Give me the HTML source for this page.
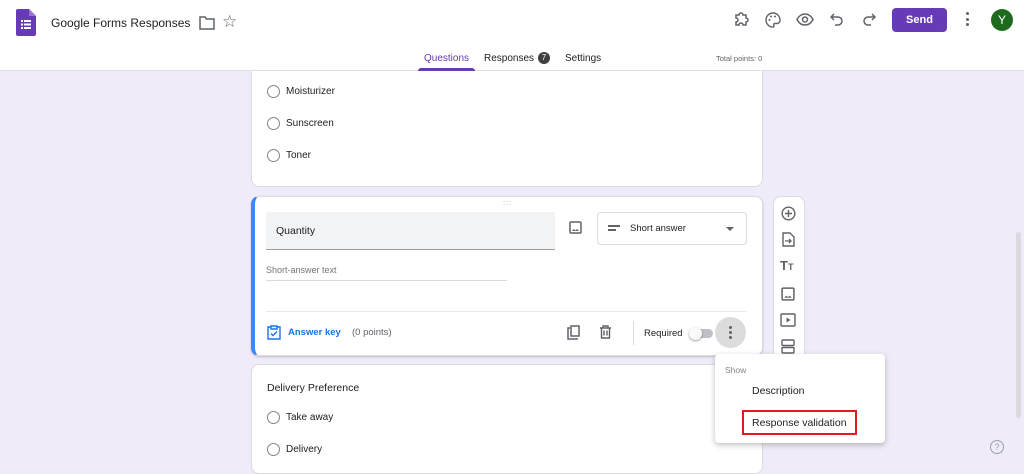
<!DOCTYPE html><html><head><style>
*{margin:0;padding:0;box-sizing:border-box}
body{width:1024px;height:463px;overflow:hidden;background:#f0ebf8;font-family:"Liberation Sans",sans-serif;position:relative;color:#202124}
.abs{position:absolute}
.hdr{left:0;top:0;width:1024px;height:71px;background:#fff;border-bottom:1px solid #e0e0e0}
.card{background:#fff;border-radius:8px;border:1px solid #dadce0}
.radio{width:13px;height:13px;border:1.3px solid #80868b;border-radius:50%}
.t13{font-size:10px}
svg{position:absolute}
</style></head><body>
<div class="abs hdr"></div>
<svg style="left:16px;top:9px" width="20" height="27" viewBox="0 0 20 27"><path d="M2 0h11l7 7v18a2 2 0 0 1-2 2H2a2 2 0 0 1-2-2V2a2 2 0 0 1 2-2z" fill="#673ab7"/><path d="M13 0v7h7z" fill="#9575cd"/><g fill="#fff"><rect x="5" y="11" width="2" height="2"/><rect x="8" y="11" width="7" height="2"/><rect x="5" y="14.5" width="2" height="2"/><rect x="8" y="14.5" width="7" height="2"/><rect x="5" y="18" width="2" height="2"/><rect x="8" y="18" width="7" height="2"/></g></svg>
<div class="abs" style="left:51px;top:16px;font-size:12px;color:#202124">Google Forms Responses</div>
<svg style="left:199px;top:16px" width="16" height="14" viewBox="0 0 16 14"><path d="M1 1h5l1.5 2H15v10H1z" fill="none" stroke="#5f6368" stroke-width="1.5"/></svg>
<div class="abs" style="left:222px;top:12px;font-size:17px;color:#5f6368">☆</div>
<svg style="left:733px;top:12px" width="16" height="16" viewBox="0 0 16 16"><path d="M3 3h3a2 2 0 0 1 4 0h3v3a2 2 0 0 1 0 4v3h-3a2 2 0 0 0-4 0H3v-3a2 2 0 0 0 0-4z" fill="none" stroke="#5f6368" stroke-width="1.5"/></svg>
<svg style="left:765px;top:12px" width="16" height="16" viewBox="0 0 16 16"><path d="M8 1a7 7 0 0 0 0 14c1 0 1.3-1 .8-1.8-.5-.8 0-1.7 1-1.7H12a3 3 0 0 0 3-3C15 4 12 1 8 1z" fill="none" stroke="#5f6368" stroke-width="1.4"/><circle cx="4.5" cy="8" r="1" fill="#5f6368"/><circle cx="6" cy="4.5" r="1" fill="#5f6368"/><circle cx="10" cy="4.5" r="1" fill="#5f6368"/></svg>
<svg style="left:796px;top:13px" width="18" height="13" viewBox="0 0 18 13"><path d="M1 6.5C3 2.5 6 1 9 1s6 1.5 8 5.5C15 10.5 12 12 9 12S3 10.5 1 6.5z" fill="none" stroke="#5f6368" stroke-width="1.5"/><circle cx="9" cy="6.5" r="2.5" fill="none" stroke="#5f6368" stroke-width="1.5"/></svg>
<svg style="left:830px;top:13px" width="14" height="14" viewBox="0 0 14 14"><path d="M4 1L1 4l3 3M1 4h7a4 4 0 0 1 0 8H5" fill="none" stroke="#5f6368" stroke-width="1.5"/></svg>
<svg style="left:862px;top:13px" width="14" height="14" viewBox="0 0 14 14"><path d="M10 1l3 3-3 3M13 4H6a4 4 0 0 0 0 8h3" fill="none" stroke="#5f6368" stroke-width="1.5"/></svg>
<div class="abs" style="left:892px;top:8px;width:55px;height:24px;background:#673ab7;border-radius:4px;color:#fff;font-size:11px;font-weight:bold;text-align:center;line-height:24px">Send</div>
<div class="abs" style="left:966px;top:12px;width:4px;font-size:0"><div style="width:3px;height:3px;background:#5f6368;border-radius:50%;margin-bottom:2.5px"></div><div style="width:3px;height:3px;background:#5f6368;border-radius:50%;margin-bottom:2.5px"></div><div style="width:3px;height:3px;background:#5f6368;border-radius:50%"></div></div>
<div class="abs" style="left:991px;top:9px;width:22px;height:22px;border-radius:50%;background:#1e6b1e;color:#fff;font-size:12px;text-align:center;line-height:22px">Y</div>
<div class="abs" style="left:424px;top:53px;font-size:10px;color:#673ab7">Questions</div>
<div class="abs" style="left:418px;top:68px;width:57px;height:3px;background:#673ab7;border-radius:3px 3px 0 0"></div>
<div class="abs" style="left:484px;top:53px;font-size:10px;color:#202124">Responses</div>
<div class="abs" style="left:538px;top:52px;width:12px;height:12px;border-radius:50%;background:#3c4043;color:#fff;font-size:8px;text-align:center;line-height:12px">7</div>
<div class="abs" style="left:565px;top:53px;font-size:10px;color:#202124">Settings</div>
<div class="abs" style="left:716px;top:54px;font-size:7.5px;color:#5f6368">Total points: 0</div>

<div class="abs card" style="left:251px;top:71px;width:512px;height:116px;border-top:none;border-radius:0 0 8px 8px"></div>
<div class="abs radio" style="left:267px;top:85px"></div><div class="abs t13" style="left:286px;top:86px">Moisturizer</div>
<div class="abs radio" style="left:267px;top:117px"></div><div class="abs t13" style="left:286px;top:118px">Sunscreen</div>
<div class="abs radio" style="left:267px;top:149px"></div><div class="abs t13" style="left:286px;top:150px">Toner</div>

<div class="abs card" style="left:251px;top:196px;width:512px;height:160px;border-left:4px solid #4285f4;box-shadow:0 1px 2px rgba(0,0,0,.2)"></div>
<div class="abs" style="left:503px;top:200px;font-size:7px;color:#9aa0a6;letter-spacing:1px">:::</div>
<div class="abs" style="left:266px;top:212px;width:289px;height:38px;background:#f1f3f4;border-bottom:1px solid #9e9e9e"></div>
<div class="abs" style="left:276px;top:225px;font-size:10.5px">Quantity</div>
<svg style="left:569px;top:221px" width="13" height="13" viewBox="0 0 13 13"><rect x="1" y="1" width="11" height="11" rx="1" fill="none" stroke="#5f6368" stroke-width="1.5"/><path d="M3 10l2-2 1.5 1.5L8 8l2 2z" fill="#5f6368"/></svg>
<div class="abs" style="left:597px;top:212px;width:150px;height:33px;border:1px solid #dadce0;border-radius:4px"></div>
<div class="abs" style="left:608px;top:225px;width:12px;height:1.5px;background:#5f6368"></div><div class="abs" style="left:608px;top:229px;width:8px;height:1.5px;background:#5f6368"></div>
<div class="abs" style="left:630px;top:223px;font-size:9.5px">Short answer</div>
<div class="abs" style="left:726px;top:227px;width:0;height:0;border-left:4px solid transparent;border-right:4px solid transparent;border-top:4px solid #5f6368"></div>
<div class="abs" style="left:266px;top:265px;font-size:9px;color:#70757a">Short-answer text</div>
<div class="abs" style="left:266px;top:280px;width:241px;height:1px;background:#dadce0"></div>
<div class="abs" style="left:266px;top:311px;width:481px;height:1px;background:#e8eaed"></div>
<svg style="left:267px;top:325px" width="14" height="15" viewBox="0 0 14 15"><path d="M4 2H1v12h12V2h-3M4 1h6v3H4z" fill="none" stroke="#1a73e8" stroke-width="1.4"/><path d="M4 8.5l2 2 4-4" fill="none" stroke="#1a73e8" stroke-width="1.4"/></svg>
<div class="abs" style="left:288px;top:327px;font-size:9.5px;color:#1a73e8;font-weight:bold">Answer key</div>
<div class="abs" style="left:352px;top:327px;font-size:9.5px;color:#5f6368">(0 points)</div>
<svg style="left:567px;top:325px" width="14" height="15" viewBox="0 0 14 15"><path d="M3 3H1v11h9v-1" fill="none" stroke="#5f6368" stroke-width="1.5"/><rect x="4" y="1" width="8" height="10" fill="none" stroke="#5f6368" stroke-width="1.5"/></svg>
<svg style="left:599px;top:325px" width="13" height="14" viewBox="0 0 13 14"><path d="M1 3h11M4 3V1h5v2M2.5 3v10h8V3M5 5.5v5M8 5.5v5" fill="none" stroke="#5f6368" stroke-width="1.4"/></svg>
<div class="abs" style="left:633px;top:321px;width:1px;height:24px;background:#dadce0"></div>
<div class="abs" style="left:644px;top:328px;font-size:9.5px">Required</div>
<div class="abs" style="left:691px;top:329px;width:22px;height:9px;border-radius:5px;background:#bdc1c6"></div>
<div class="abs" style="left:689px;top:327px;width:13px;height:13px;border-radius:50%;background:#fafafa;box-shadow:0 1px 2px rgba(0,0,0,.4)"></div>
<div class="abs" style="left:715px;top:317px;width:31px;height:31px;border-radius:50%;background:#dcdcdc"></div>
<div class="abs" style="left:729px;top:326px;font-size:0"><div style="width:3px;height:3px;background:#5f6368;border-radius:50%;margin-bottom:2px"></div><div style="width:3px;height:3px;background:#5f6368;border-radius:50%;margin-bottom:2px"></div><div style="width:3px;height:3px;background:#5f6368;border-radius:50%"></div></div>

<div class="abs card" style="left:773px;top:196px;width:32px;height:170px"></div>
<svg style="left:781px;top:206px" width="15" height="15" viewBox="0 0 15 15"><circle cx="7.5" cy="7.5" r="6.3" fill="none" stroke="#5f6368" stroke-width="1.4"/><path d="M7.5 4v7M4 7.5h7" stroke="#5f6368" stroke-width="1.4"/></svg>
<svg style="left:782px;top:232px" width="13" height="15" viewBox="0 0 13 15"><path d="M1 1h7l4 4v9H1z" fill="none" stroke="#5f6368" stroke-width="1.4"/><path d="M3 9h6M7 7l2 2-2 2" fill="none" stroke="#5f6368" stroke-width="1.3"/></svg>
<div class="abs" style="left:780px;top:258px;font-size:13px;font-weight:bold;color:#5f6368">T<span style="font-size:9px">T</span></div>
<svg style="left:781px;top:287px" width="14" height="14" viewBox="0 0 13 13"><rect x="1" y="1" width="11" height="11" rx="1" fill="none" stroke="#5f6368" stroke-width="1.4"/><path d="M3 10l2-2 1.5 1.5L8 8l2 2z" fill="#5f6368"/></svg>
<svg style="left:780px;top:313px" width="16" height="14" viewBox="0 0 16 14"><rect x="1" y="1" width="14" height="12" rx="1" fill="none" stroke="#5f6368" stroke-width="1.4"/><path d="M6.5 4.5v5l4-2.5z" fill="#5f6368"/></svg>
<svg style="left:781px;top:339px" width="14" height="15" viewBox="0 0 14 15"><rect x="1" y="1" width="12" height="5.5" rx="1" fill="none" stroke="#5f6368" stroke-width="1.4"/><rect x="1" y="8.5" width="12" height="5.5" rx="1" fill="none" stroke="#5f6368" stroke-width="1.4"/></svg>

<div class="abs card" style="left:251px;top:364px;width:512px;height:110px"></div>
<div class="abs" style="left:267px;top:382px;font-size:10.5px">Delivery Preference</div>
<div class="abs radio" style="left:267px;top:411px"></div><div class="abs t13" style="left:286px;top:412px">Take away</div>
<div class="abs radio" style="left:267px;top:443px"></div><div class="abs t13" style="left:286px;top:444px">Delivery</div>

<div class="abs" style="left:715px;top:354px;width:170px;height:89px;background:#fff;border-radius:4px;box-shadow:0 2px 6px rgba(0,0,0,.25)"></div>
<div class="abs" style="left:725px;top:365px;font-size:8.5px;color:#80868b">Show</div>
<div class="abs" style="left:752px;top:385px;font-size:10.5px">Description</div>
<div class="abs" style="left:742px;top:410px;width:115px;height:25px;border:2px solid #e01b1b"></div>
<div class="abs" style="left:752px;top:417px;font-size:10.5px">Response validation</div>

<div class="abs" style="left:1016px;top:232px;width:5px;height:186px;background:#dcdae0;border-radius:3px"></div>
<div class="abs" style="left:990px;top:440px;width:14px;height:14px;border:1.3px solid #9aa0a6;border-radius:50%;color:#9aa0a6;font-size:9px;text-align:center;line-height:12px">?</div>
</body></html>
